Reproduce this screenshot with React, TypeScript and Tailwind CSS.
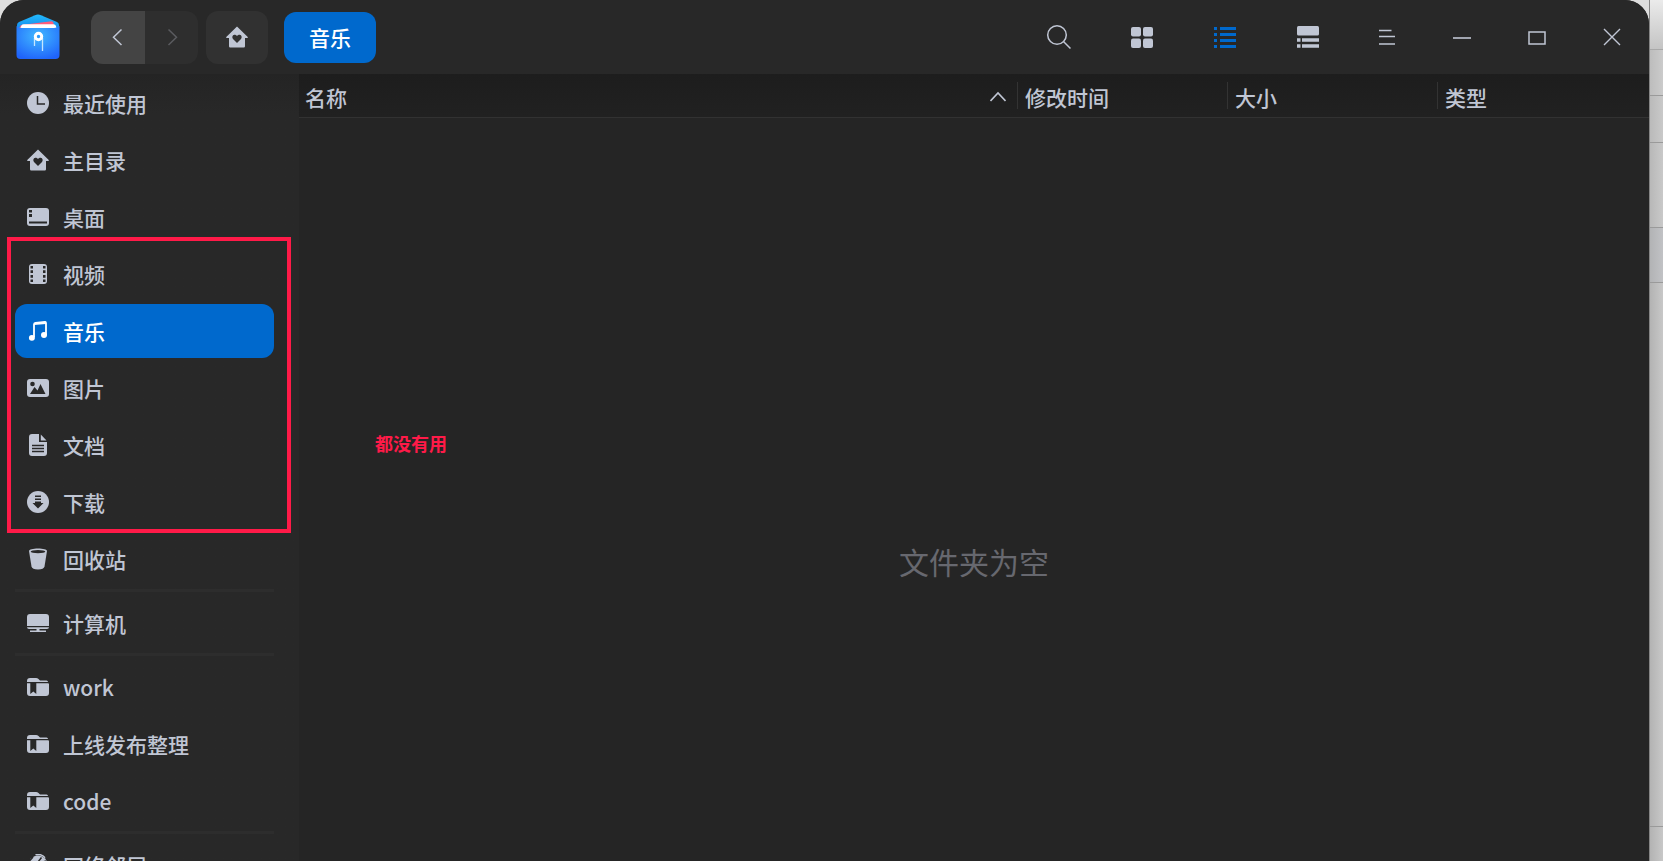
import { useState, type ReactNode } from "react"
import clsx from "clsx"

const HomeIcon = () => (
    <svg width="22" height="22" viewBox="0 0 22 22" fill="currentColor" aria-hidden="true">
        <path
            fillRule="evenodd"
            d="M11 0.5 22 11.2 21.4 12H19v8.3a1.2 1.2 0 0 1-1.2 1.2H4.2A1.2 1.2 0 0 1 3 20.300V12H0.600L0 11.200ZM11 17l4-4.100c1.200-1.400.8-3.900-1.300-4.200-1.200-.1-2.200.5-2.700 1.400-.5-.9-1.500-1.500-2.700-1.400-2.100.3-2.500 2.800-1.300 4.200Z"
        />
    </svg>
)

const RecentIcon = () => (
    <svg width="22" height="22" viewBox="0 0 22 22" aria-hidden="true">
        <circle cx="11" cy="11" r="11" fill="currentColor" />
        <path d="M10.500 4v8H18" fill="none" stroke="#282828" strokeWidth="1.500" />
    </svg>
)

const DesktopIcon = () => (
    <svg width="22" height="22" viewBox="0 0 22 22" aria-hidden="true">
        <rect y="2" width="22" height="18" rx="3" fill="currentColor" />
        <path d="M2 4h3v2.500H2zM2 8h3v3H2zM2 15.500h18v2H2z" fill="#282828" />
    </svg>
)

const VideoIcon = () => (
    <svg width="22" height="22" viewBox="0 0 22 22" aria-hidden="true">
        <rect x="2" y="1" width="18" height="20" rx="3" fill="currentColor" />
        <path
            d="M3.500 3H6v2.500H3.500zM3.500 7.200H6v2.800H3.500zM3.500 12H6v2.800H3.500zM3.500 16.500H6V19H3.500zM16 3h2.500v2.500H16zM16 7.200h2.500v2.800H16zM16 12h2.500v2.800H16zM16 16.500h2.500V19H16z"
            fill="#282828"
        />
    </svg>
)

const MusicIcon = () => (
    <svg width="22" height="22" viewBox="0 0 22 22" aria-hidden="true">
        <path d="M7 17V4.500Q7 3 8.500 2.800L18 2q1 0 1 1v12" fill="none" stroke="currentColor" strokeWidth="1.800" />
        <path d="M7 3 19 1.500V4L7 5Z" fill="currentColor" />
        <ellipse cx="4.900" cy="17.800" rx="3" ry="2.900" fill="currentColor" />
        <ellipse cx="17" cy="15" rx="3" ry="2.900" fill="currentColor" />
    </svg>
)

const PictureIcon = () => (
    <svg width="22" height="22" viewBox="0 0 22 22" aria-hidden="true">
        <rect y="2" width="22" height="18" rx="3" fill="currentColor" />
        <circle cx="5.500" cy="7" r="2.300" fill="#282828" />
        <path d="M3 17 7.500 10l3 3.500L13.500 7 18.500 17Z" fill="#282828" />
    </svg>
)

const DocumentIcon = () => (
    <svg width="22" height="22" viewBox="0 0 22 22" aria-hidden="true">
        <path d="M5 0h7v8h8v11a3 3 0 0 1-3 3H5a3 3 0 0 1-3-3V3a3 3 0 0 1 3-3ZM13.800.5 19.500 6.500H13.800Z" fill="currentColor" />
        <path d="M5 11.500h12M5 14.500h12M5 17.500h12" stroke="#282828" strokeWidth="1.300" />
    </svg>
)

const DownloadIcon = () => (
    <svg width="22" height="22" viewBox="0 0 22 22" aria-hidden="true">
        <circle cx="11" cy="11" r="11" fill="currentColor" />
        <path d="M8 4.500h6V6H8zM8 7.500h6V9H8zM8 10.500h6V12h2.500L11 17.500 5.500 12H8z" fill="#282828" />
    </svg>
)

const TrashIcon = () => (
    <svg width="22" height="22" viewBox="0 0 22 22" aria-hidden="true">
        <path d="M2 3C2 1.500 6 .5 11 .5S20 1.500 20 3L17.500 18.500C17 20.500 15 21.500 11 21.500S5 20.500 4.500 18.500Z" fill="currentColor" />
        <ellipse cx="11" cy="3.700" rx="7.300" ry="1.600" fill="#282828" />
    </svg>
)

const ComputerIcon = () => (
    <svg width="22" height="22" viewBox="0 0 22 22" aria-hidden="true">
        <path
            d="M3 2h16a3 3 0 0 1 3 3v9H0V5a3 3 0 0 1 3-3ZM0 15.200h22q0 1.800-2 1.800h-7.500v1.500H19V20H3v-1.500h6.500V17H2Q0 17 0 15.200Z"
            fill="currentColor"
        />
    </svg>
)

const BookmarkIcon = () => (
    <svg width="22" height="22" viewBox="0 0 22 22" aria-hidden="true">
        <path
            d="M0 6V5a3 3 0 0 1 3-3h6q1.500 0 2.500 1l1.500 1.500h6.500q1.500 0 1.500 1.500ZM0 7.200h3.300V18L6.300 15.500 9.300 18V7.200H21q1 0 1 1V17a3 3 0 0 1-3 3H3a3 3 0 0 1-3-3Z"
            fill="currentColor"
        />
    </svg>
)

const NetworkIcon = () => (
    <svg width="22" height="22" viewBox="0 0 22 22" aria-hidden="true">
        <circle cx="11" cy="11" r="9.500" fill="currentColor" />
        <path d="M2 7.500 6 3M11 8l3.500-4.500M13 9l6-2" fill="none" stroke="#282828" strokeWidth="1.500" />
        <path d="M8.500.8q6-1.500 9.500 3" fill="none" stroke="currentColor" strokeWidth="1.400" />
    </svg>
)

const LogoIcon = () => (
    <svg width="44" height="46" viewBox="0 0 44 46" aria-hidden="true">
        <defs>
            <radialGradient id="pocket" cx="0.500" cy="0.300" r="0.750">
                <stop offset="0" stopColor="#41b8ff" />
                <stop offset="1" stopColor="#1f63fb" />
            </radialGradient>
            <linearGradient id="flap" x1="0" y1="0" x2="0" y2="1">
                <stop offset="0" stopColor="#22b9fb" />
                <stop offset="1" stopColor="#1385ec" />
            </linearGradient>
        </defs>
        <path d="M1 16V11Q1 9 3 8L19 1.200Q22 0 25 1.200L41 8Q43 9 43 11V16Z" fill="url(#flap)" />
        <path d="M3 14 5 11 35.500 7.200Q37 7.200 37.500 9L38 14Z" fill="#ff5c7c" />
        <path d="M4 14.500 5.500 11.500Q6 10.300 8 10.300H37.500Q39.500 10.300 40 12L40.500 14.500Z" fill="#fff" />
        <path d="M0.500 12Q3 14 6 14H38Q41 14 43.500 12V41Q43.500 45 39.500 45H4.500Q0.500 45 0.500 41Z" fill="url(#pocket)" />
        <path d="M18.500 24v8M26.500 24v13" stroke="#c5e6ff" strokeWidth="1.300" />
        <circle cx="22.500" cy="22.500" r="3.200" fill="#2d9bfa" stroke="#fff" strokeWidth="3" />
    </svg>
)

type Place = { name: string; icon: ReactNode }

const topPlaces: Place[] = [
    { name: "最近使用", icon: <RecentIcon /> },
    { name: "主目录", icon: <HomeIcon /> },
    { name: "桌面", icon: <DesktopIcon /> },
]

const mediaPlaces: Place[] = [
    { name: "视频", icon: <VideoIcon /> },
    { name: "音乐", icon: <MusicIcon /> },
    { name: "图片", icon: <PictureIcon /> },
    { name: "文档", icon: <DocumentIcon /> },
    { name: "下载", icon: <DownloadIcon /> },
]

const bookmarks: Place[] = [
    { name: "work", icon: <BookmarkIcon /> },
    { name: "上线发布整理", icon: <BookmarkIcon /> },
    { name: "code", icon: <BookmarkIcon /> },
]

function PlaceList({ places, current, onSelect }: { places: Place[]; current: string; onSelect: (name: string) => void }) {
    return (
        <ul className="flex flex-col gap-[3px]">
            {places.map((place) => (
                <li key={place.name}>
                    <a
                        href="#"
                        onClick={(e) => {
                            e.preventDefault()
                            onSelect(place.name)
                        }}
                        className={clsx(
                            "flex h-[54px] items-center gap-[14px] rounded-xl px-3",
                            place.name === current ? "bg-[#0069cd] text-white" : "text-[#c0c6d4]"
                        )}
                    >
                        {place.icon}
                        <span>{place.name}</span>
                    </a>
                </li>
            ))}
        </ul>
    )
}

const Divider = () => <hr className="mt-[3px] mb-1 h-[3px] shrink-0 border-0 bg-[#2d2d2d]" />

function ToolButton({ label, active, children }: { label: string; active?: boolean; children: ReactNode }) {
    return (
        <button
            aria-label={label}
            className={clsx("flex h-full w-[83px] items-center justify-center", active ? "text-[#0069cd]" : "text-[#c0c6d4]")}
        >
            {children}
        </button>
    )
}

function WindowButton({ label, children }: { label: string; children: ReactNode }) {
    return (
        <button aria-label={label} className="flex h-full w-[75px] items-center justify-center text-[#c0c6d4]">
            {children}
        </button>
    )
}

function TitleBar({ current }: { current: string }) {
    return (
        <header className="flex h-[74px] shrink-0 items-center bg-[#282828] pl-4">
            <LogoIcon />
            <div className="ml-[31px] flex h-[53px] overflow-hidden rounded-xl">
                <button aria-label="后退" className="flex w-[54px] items-center justify-center bg-[#444444] text-[#c0c6d4]">
                    <svg width="22" height="22" viewBox="0 0 22 22" fill="none" stroke="currentColor" strokeWidth="1.500">
                        <path d="M14.500 3.500 6.500 11.300l8 7.700" />
                    </svg>
                </button>
                <button aria-label="前进" className="flex w-[53px] items-center justify-center bg-[#2e2e2e] text-[#5a5b5f]">
                    <svg width="22" height="22" viewBox="0 0 22 22" fill="none" stroke="currentColor" strokeWidth="1.500">
                        <path d="M7.500 3.500l8 7.800-8 7.700" />
                    </svg>
                </button>
            </div>
            <button
                aria-label="主目录"
                className="ml-2 flex h-[53px] w-[62px] items-center justify-center rounded-xl bg-[#313131] text-[#c0c6d4]"
            >
                <HomeIcon />
            </button>
            <button className="ml-4 h-[51px] rounded-xl bg-[#0069cd] px-[25px] text-white">{current}</button>

            <div className="ml-auto flex h-full">
                <ToolButton label="搜索">
                    <svg width="26" height="26" viewBox="0 0 26 26" fill="none" stroke="currentColor" strokeWidth="1.500">
                        <circle cx="11" cy="11" r="9.300" />
                        <path d="m17.500 17.500 7 7" />
                    </svg>
                </ToolButton>
                <ToolButton label="图标视图">
                    <svg width="22" height="22" viewBox="0 0 22 22" fill="currentColor">
                        <rect y="1" width="10" height="9.500" rx="2" />
                        <rect x="12" y="1" width="10" height="9.500" rx="2" />
                        <rect y="12.500" width="10" height="9.500" rx="2" />
                        <rect x="12" y="12.500" width="10" height="9.500" rx="2" />
                    </svg>
                </ToolButton>
                <ToolButton label="列表视图" active>
                    <svg width="22" height="22" viewBox="0 0 22 22" fill="currentColor">
                        <path d="M0 1h3v3H0zM6 1h16v3H6zM0 7h3v3H0zM6 7h16v3H6zM0 13h3v3H0zM6 13h16v3H6zM0 19h3v3H0zM6 19h16v3H6z" />
                    </svg>
                </ToolButton>
                <ToolButton label="分栏视图">
                    <svg width="22" height="22" viewBox="0 0 22 22" fill="currentColor">
                        <rect width="22" height="9.500" rx="1.500" />
                        <path d="M0 12.300h3.500v3.400H0zM5 12.300h17v3.400H5zM0 18.300h3.500v3.400H0zM5 18.300h17v3.400H5z" />
                    </svg>
                </ToolButton>
                <WindowButton label="菜单">
                    <svg width="16" height="16" viewBox="0 0 16 16" stroke="currentColor" strokeWidth="1.400">
                        <path d="M0 1.500h12.500M0 7.500h16M0 15h16" />
                    </svg>
                </WindowButton>
                <WindowButton label="最小化">
                    <svg width="18" height="18" viewBox="0 0 18 18" stroke="currentColor" strokeWidth="1.600">
                        <path d="M0 10h18" />
                    </svg>
                </WindowButton>
                <WindowButton label="最大化">
                    <svg width="18" height="18" viewBox="0 0 18 18" fill="none" stroke="currentColor" strokeWidth="1.500">
                        <rect x="1" y="4" width="16" height="12" />
                    </svg>
                </WindowButton>
                <WindowButton label="关闭">
                    <svg width="18" height="18" viewBox="0 0 18 18" stroke="currentColor" strokeWidth="1.400">
                        <path d="m1 1 16 16M17 1 1 17" />
                    </svg>
                </WindowButton>
            </div>
        </header>
    )
}

function FileTable() {
    return (
        <table className="w-full table-fixed border-collapse bg-linear-to-b from-[#1d1d1d] to-[#212121] text-left text-[#c0c6d4]">
            <thead>
                <tr className="h-[43px] border-b border-[#323232]">
                    <th aria-sort="ascending" className="p-0 font-medium">
                        <div className="flex h-[27px] items-center justify-between border-r border-[#333333] pt-[3px] pr-[11px] pl-[6px]">
                            <span>名称</span>
                            <svg width="16" height="16" viewBox="0 0 16 16" fill="none" stroke="currentColor" strokeWidth="1.600">
                                <path d="M0.500 12 8 4l7.500 8" />
                            </svg>
                        </div>
                    </th>
                    <th className="w-[210px] p-0 font-medium">
                        <div className="flex h-[27px] items-center border-r border-[#333333] pt-[3px] pl-[7px]">修改时间</div>
                    </th>
                    <th className="w-[210px] p-0 font-medium">
                        <div className="flex h-[27px] items-center border-r border-[#333333] pt-[3px] pl-[7px]">大小</div>
                    </th>
                    <th className="w-[211px] p-0 font-medium">
                        <div className="flex h-[27px] items-center pt-[3px] pl-[7px]">类型</div>
                    </th>
                </tr>
            </thead>
        </table>
    )
}

// Edge of the sheet lying under the window
function Backdrop() {
    return (
        <div className="flex w-[14px] shrink-0 flex-col border-l border-[#858585]">
            <div className="h-[50px] shrink-0 border-b border-[#a8a8a8] bg-linear-to-b from-[#ebebeb] to-[#c4c4c4]" />
            <div className="h-[46px] shrink-0 border-b border-[#9a9a9a] bg-linear-to-r from-[#bdbdbd] to-[#cbcbcb]" />
            <div className="h-[47px] shrink-0 border-b border-[#9a9a9a] bg-linear-to-r from-[#bababa] to-[#c9c9c9]" />
            <div className="h-[85px] shrink-0 border-b border-[#9a9a9a] bg-linear-to-r from-[#b8b8b8] to-[#c9c9c9]" />
            <div className="h-[55px] shrink-0 border-b border-[#9a9a9a] bg-linear-to-r from-[#b2b3b5] to-[#c1c2c5]" />
            <div className="h-[543px] shrink-0 bg-linear-to-r from-[#b3b3b3] to-[#c8c8c8]" />
            <div className="flex-1 border-t border-[#9a9a9a] bg-linear-to-r from-[#b3b3b3] to-[#c8c8c8]" />
        </div>
    )
}

export default function App() {
    const [current, setCurrent] = useState("音乐")

    return (
        <div className="flex h-screen overflow-hidden bg-[#dedede] font-['Noto_Sans_CJK_SC',sans-serif] text-[21px] leading-7 font-medium">
            <div className="flex min-w-0 flex-1 flex-col overflow-hidden rounded-t-3xl bg-[#252525]">
                <TitleBar current={current} />
                <div className="flex min-h-0 flex-1">
                    <nav className="flex w-[299px] shrink-0 flex-col bg-[#282828] bg-linear-to-b from-[#242424] to-[#282828] to-5% pt-[2px] pr-[25px] pl-[15px]">
                        <PlaceList places={topPlaces} current={current} onSelect={setCurrent} />
                        <div className="relative my-[3px]">
                            <PlaceList places={mediaPlaces} current={current} onSelect={setCurrent} />
                            <div className="pointer-events-none absolute -top-[10px] -right-[17px] -bottom-1 -left-2 border-4 border-[#ff1a48]" />
                        </div>
                        <PlaceList places={[{ name: "回收站", icon: <TrashIcon /> }]} current={current} onSelect={setCurrent} />
                        <Divider />
                        <PlaceList places={[{ name: "计算机", icon: <ComputerIcon /> }]} current={current} onSelect={setCurrent} />
                        <Divider />
                        <PlaceList places={bookmarks} current={current} onSelect={setCurrent} />
                        <Divider />
                        <PlaceList places={[{ name: "网络邻居", icon: <NetworkIcon /> }]} current={current} onSelect={setCurrent} />
                    </nav>

                    <main className="relative min-w-0 flex-1">
                        <FileTable />
                        <p className="absolute top-[355px] left-[76px] text-lg font-bold text-[#ff1a48]">都没有用</p>
                        <p className="pt-[423px] text-center text-3xl leading-10 font-normal text-[#67686f]">文件夹为空</p>
                    </main>
                </div>
            </div>
            <Backdrop />
        </div>
    )
}
